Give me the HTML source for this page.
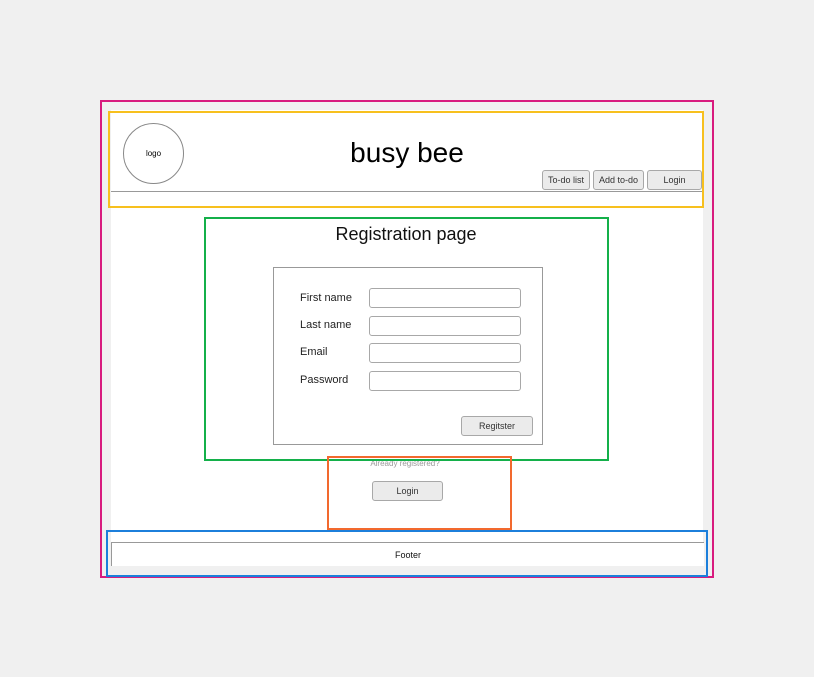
<!DOCTYPE html>
<html><head><style>
*{margin:0;padding:0;box-sizing:border-box}
body{width:814px;height:677px;background:#f0f0f0;position:relative;font-family:"Liberation Sans",Arial,sans-serif;overflow:hidden}
.a{position:absolute}
.btn{position:absolute;background:#ebebeb;border:1px solid #a8a8a8;border-radius:3px;font-size:9px;color:#333;text-align:center}
.inp{position:absolute;left:369px;width:152px;height:20px;background:#fff;border:1px solid #a8a8a8;border-radius:3px}
.lbl{position:absolute;left:300px;font-size:11px;color:#222}
</style></head><body>
<div class="a" style="left:111px;top:110px;width:592px;height:456px;background:#fff"></div>
<div class="a" style="left:111px;top:191px;width:592px;height:1px;background:#999"></div>
<div class="a" style="left:123px;top:123px;width:61px;height:61px;border:1px solid #888;border-radius:50%;font-size:8px;text-align:center;line-height:59px">logo</div>
<div class="a" style="left:300px;top:137px;width:214px;text-align:center;font-size:28px;color:#000">busy bee</div>
<div class="btn" style="left:542px;top:170px;width:48px;height:20px;line-height:18px">To-do list</div>
<div class="btn" style="left:593px;top:170px;width:51px;height:20px;line-height:18px">Add to-do</div>
<div class="btn" style="left:647px;top:170px;width:55px;height:20px;line-height:18px">Login</div>
<div class="a" style="left:206px;top:224px;width:400px;text-align:center;font-size:18px;color:#111">Registration page</div>
<div class="a" style="left:273px;top:267px;width:270px;height:178px;border:1px solid #999"></div>
<div class="lbl" style="top:292px">First name</div>
<div class="lbl" style="top:319px">Last name</div>
<div class="lbl" style="top:346px">Email</div>
<div class="lbl" style="top:374px">Password</div>
<div class="inp" style="top:288px"></div>
<div class="inp" style="top:316px"></div>
<div class="inp" style="top:343px"></div>
<div class="inp" style="top:371px"></div>
<div class="btn" style="left:461px;top:416px;width:72px;height:20px;line-height:18px">Regitster</div>
<div class="a" style="left:330px;top:459px;width:150px;text-align:center;font-size:8px;color:#999">Already registered?</div>
<div class="btn" style="left:372px;top:481px;width:71px;height:20px;line-height:18px">Login</div>
<div class="a" style="left:111px;top:542px;width:593px;height:24px;border:1px solid #999;border-bottom:none;border-right:none;background:#fff;font-size:9px;text-align:center;line-height:24px;color:#111">Footer</div>
<div class="a" style="left:100px;top:100px;width:614px;height:478px;border:2px solid #d81b7e"></div>
<div class="a" style="left:108px;top:111px;width:596px;height:97px;border:2px solid #f7c01e"></div>
<div class="a" style="left:204px;top:217px;width:405px;height:244px;border:2px solid #14b04a"></div>
<div class="a" style="left:327px;top:456px;width:185px;height:74px;border:2px solid #f2692e"></div>
<div class="a" style="left:106px;top:530px;width:602px;height:47px;border:2px solid #1c7fdb"></div>
</body></html>
